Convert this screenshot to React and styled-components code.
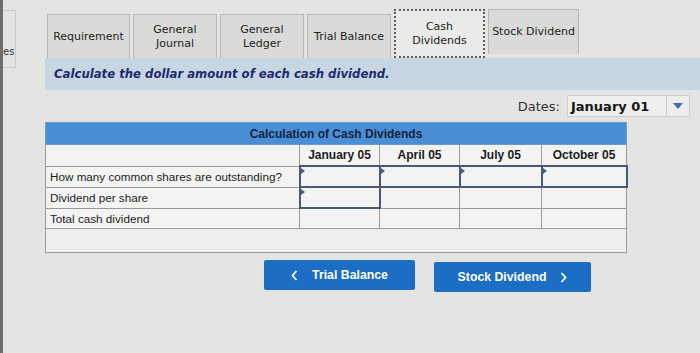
import React from 'react';
import styled, { createGlobalStyle } from 'styled-components';

const GlobalStyle = createGlobalStyle`
  html, body {
    margin: 0;
    padding: 0;
    background: #e4e5e2;
    overflow: hidden;
  }
`;

const Page = styled.div`
  display: flex;
  width: 700px;
  height: 353px;
  background: #e4e5e2;
`;

const SideStrip = styled.div`
  width: 3px;
  background: #6d6e6c;
`;

const SidePanel = styled.div`
  width: 13px;
  height: 58px;
  margin-top: 10px;
  border: 1px solid #c9cac7;
  border-left: none;
  font-family: 'DejaVu Sans', sans-serif;
  font-size: 10px;
  color: #333;
  display: flex;
  align-items: flex-end;
  padding-bottom: 10px;
  box-sizing: border-box;
  overflow: hidden;
`;

const Main = styled.div`
  flex: 1;
  padding-left: 29px;
  font-family: 'DejaVu Sans', Verdana, sans-serif;
`;

const Tabs = styled.div`
  display: flex;
  gap: 3px;
  height: 58px;
  padding-left: 2px;
`;

const Tab = styled.div`
  box-sizing: border-box;
  width: ${({ w }) => w}px;
  height: ${({ h }) => h}px;
  margin-top: ${({ top }) => top}px;
  display: flex;
  align-items: center;
  justify-content: center;
  text-align: center;
  font-size: 11px;
  line-height: 14px;
  color: #222;
  background: ${({ active }) => (active ? '#eaebe8' : '#dadbd8')};
  border: ${({ active }) => (active ? '2px dotted #5a5c66' : '1px solid #b8b9b6')};
  border-bottom: ${({ active }) => (active ? '2px dotted #5a5c66' : 'none')};
`;

const Instruction = styled.div`
  height: 32px;
  background: #c8d6e3;
  display: flex;
  align-items: center;
  padding-left: 9px;
  font-size: 11.7px;
  font-weight: bold;
  font-style: italic;
  color: #1d2a6c;
`;

const DatesRow = styled.div`
  display: flex;
  justify-content: flex-end;
  align-items: center;
  gap: 7px;
  margin-top: 5px;
  padding-right: 10px;
  height: 22px;
`;

const DatesLabel = styled.span`
  font-size: 13px;
  color: #333;
`;

const Select = styled.div`
  display: flex;
  width: 123px;
  height: 22px;
  box-sizing: border-box;
  border: 1px solid #cfd0cd;
  background: #eeefec;
`;

const SelectValue = styled.div`
  flex: 1;
  display: flex;
  align-items: center;
  padding-left: 3px;
  font-size: 13px;
  font-weight: bold;
  color: #151515;
`;

const SelectArrow = styled.div`
  width: 22px;
  border-left: 1px solid #cfd0cd;
  display: flex;
  align-items: center;
  justify-content: center;
`;

const Table = styled.table`
  margin-top: 5px;
  width: 581px;
  border-collapse: collapse;
  table-layout: fixed;
  font-family: 'Liberation Sans', Arial, sans-serif;
  font-size: 11.7px;
  color: #1c1c1c;
`;

const TitleCell = styled.th`
  height: 21px;
  background: #4a8fd5;
  color: #14233f;
  font-weight: bold;
  font-size: 12px;
  padding: 0;
  border: 1px solid #6b9ad0;
`;

const HeadCell = styled.th`
  height: 20px;
  background: #f3f4f2;
  border: 1px solid #9a9b99;
  font-weight: bold;
  font-size: 12px;
  padding: 0;
`;

const LabelCell = styled.td`
  height: 19px;
  background: #f3f4f2;
  border: 1px solid #9a9b99;
  padding: 0 0 0 4px;
  white-space: nowrap;
`;

const Cell = styled.td`
  height: 19px;
  background: #f3f4f2;
  border: ${({ input }) => (input ? '2px solid #4b5873' : '1px solid #9a9b99')};
  padding: 0;
  position: relative;
`;

const Marker = styled.span`
  position: absolute;
  left: 0;
  top: 1px;
  width: 0;
  height: 0;
  border-top: 3px solid transparent;
  border-bottom: 3px solid transparent;
  border-left: 4px solid #3f5f9c;
`;

const BlankCell = styled.td`
  height: 21px;
  background: #eeefed;
  border: 1px solid #9a9b99;
`;

const Buttons = styled.div`
  display: flex;
  gap: 19px;
  margin-top: 7px;
  padding-left: 219px;
`;

const NavButton = styled.div`
  box-sizing: border-box;
  width: ${({ w }) => w}px;
  height: 30px;
  margin-top: ${({ top }) => top || 0}px;
  background: #1c6dc4;
  border-radius: 2px;
  display: flex;
  align-items: center;
  justify-content: center;
  gap: 14px;
  font-family: 'Liberation Sans', Arial, sans-serif;
  font-size: 12.3px;
  font-weight: bold;
  color: #fff;
`;

const Chevron = ({ dir }) => (
  <svg width="7" height="11" viewBox="0 0 7 11">
    <path
      d={dir === 'left' ? 'M5.5 1 L1.5 5.5 L5.5 10' : 'M1.5 1 L5.5 5.5 L1.5 10'}
      fill="none"
      stroke="#fff"
      strokeWidth="1.8"
    />
  </svg>
);

const tabs = [
  { label: 'Requirement', w: 83, h: 44, top: 14 },
  { label: 'General\nJournal', w: 84, h: 44, top: 14 },
  { label: 'General\nLedger', w: 84, h: 44, top: 14 },
  { label: 'Trial Balance', w: 84, h: 44, top: 14 },
  { label: 'Cash\nDividends', w: 91, h: 49, top: 9, active: true },
  { label: 'Stock Dividend', w: 91, h: 45, top: 9 },
];

const rows = [
  { label: 'How many common shares are outstanding?', inputs: [true, true, true, true] },
  { label: 'Dividend per share', inputs: [true, false, false, false] },
  { label: 'Total cash dividend', inputs: [false, false, false, false] },
];

export default function App() {
  return (
    <Page>
      <GlobalStyle />
      <SideStrip />
      <SidePanel>es</SidePanel>
      <Main>
        <Tabs>
          {tabs.map((t, i) => (
            <Tab key={i} w={t.w} h={t.h} top={t.top} active={t.active}>
              <span style={{ whiteSpace: 'pre-line' }}>{t.label}</span>
            </Tab>
          ))}
        </Tabs>
        <Instruction>Calculate the dollar amount of each cash dividend.</Instruction>
        <DatesRow>
          <DatesLabel>Dates:</DatesLabel>
          <Select>
            <SelectValue>January 01</SelectValue>
            <SelectArrow>
              <svg width="10" height="6" viewBox="0 0 10 6">
                <path d="M0 0 L10 0 L5 6 Z" fill="#3d6fae" />
              </svg>
            </SelectArrow>
          </Select>
        </DatesRow>
        <Table>
          <colgroup>
            <col style={{ width: 254 }} />
            <col style={{ width: 80 }} />
            <col style={{ width: 80 }} />
            <col style={{ width: 82 }} />
            <col style={{ width: 85 }} />
          </colgroup>
          <thead>
            <tr>
              <TitleCell colSpan={5}>Calculation of Cash Dividends</TitleCell>
            </tr>
            <tr>
              <HeadCell />
              <HeadCell>January 05</HeadCell>
              <HeadCell>April 05</HeadCell>
              <HeadCell>July 05</HeadCell>
              <HeadCell>October 05</HeadCell>
            </tr>
          </thead>
          <tbody>
            {rows.map((r, i) => (
              <tr key={i}>
                <LabelCell>{r.label}</LabelCell>
                {r.inputs.map((inp, j) => (
                  <Cell key={j} input={inp}>
                    {inp && <Marker />}
                  </Cell>
                ))}
              </tr>
            ))}
            <tr>
              <BlankCell colSpan={5} />
            </tr>
          </tbody>
        </Table>
        <Buttons>
          <NavButton w={151}>
            <Chevron dir="left" />
            Trial Balance
          </NavButton>
          <NavButton w={157} top={2}>
            Stock Dividend
            <Chevron dir="right" />
          </NavButton>
        </Buttons>
      </Main>
    </Page>
  );
}
